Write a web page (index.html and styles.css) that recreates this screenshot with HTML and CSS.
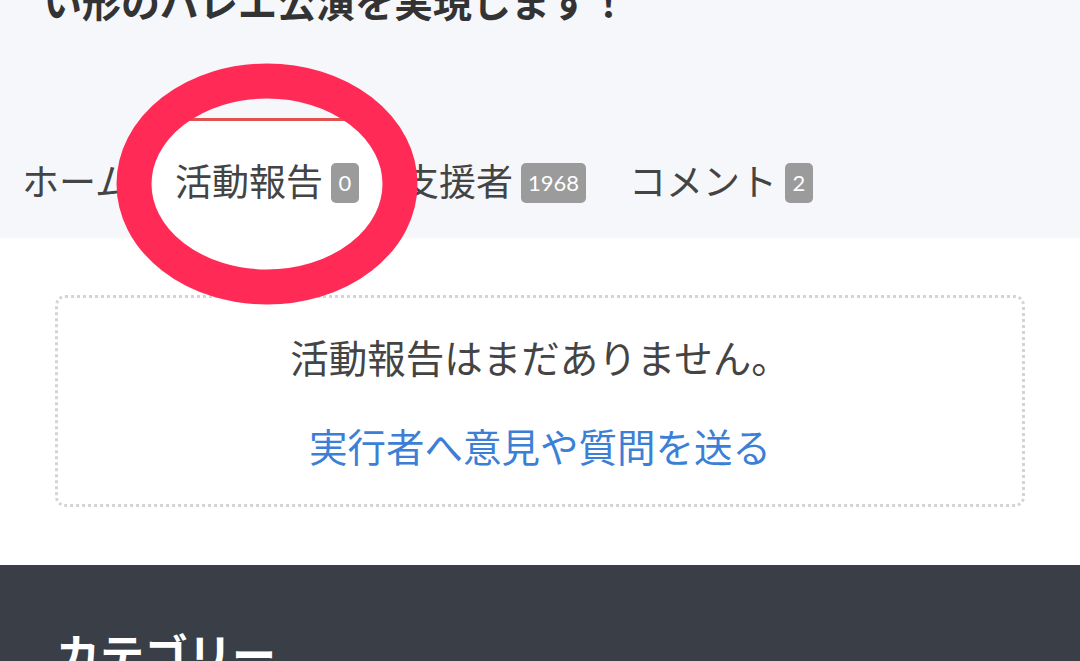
FILE: index.html
```html
<!DOCTYPE html>
<html lang="ja">
<head>
    <meta charset="UTF-8">
    <meta name="viewport" content="width=device-width, initial-scale=1.0">
    <title>プロジェクト 活動報告</title>
    <link rel="stylesheet" href="styles.css">
</head>
<body>
    <header class="project-head">
        <h1 class="project-title">い形のバレエ公演を実現します！</h1>

        <nav class="tabs">
            <a href="#" class="tab">ホーム</a>
            <a href="#" class="tab tab-active">活動報告<span class="tab-count">0</span></a>
            <a href="#" class="tab">支援者<span class="tab-count">1968</span></a>
            <a href="#" class="tab">コメント<span class="tab-count">2</span></a>
        </nav>
    </header>

    <main class="tab-body">
        <div class="empty-box">
            <p class="empty-text">活動報告はまだありません。</p>
            <a href="#" class="empty-link">実行者へ意見や質問を送る</a>
        </div>
    </main>

    <footer class="site-footer">
        <h2 class="footer-title">カテゴリー</h2>
    </footer>

    <!-- hand drawn marker over the active tab -->
    <svg class="marker" width="320" height="260" viewBox="0 0 320 260">
        <ellipse cx="160" cy="130" rx="133" ry="103" fill="none" stroke="#ff2b56" stroke-width="35"/>
    </svg>
</body>
</html>
```

FILE: styles.css
```css
:root {
    --head-bg: #f5f7fa;
    --text-dark: #333;
    --text-mid: #444;
    --badge-bg: #9b9b9b;
    --accent-red: #e0524b;
    --link-blue: #3c7fd6;
    --footer-bg: #3a3f47;
    --white: #fff;
}

* {
    margin: 0;
    padding: 0;
    box-sizing: border-box;
}

body {
    font-family: "Noto Sans CJK JP", "Noto Sans", sans-serif;
    line-height: 1.5;
    background-color: var(--white);
    position: relative;
    overflow: hidden;
    height: 661px;
}

.project-head {
    background-color: var(--head-bg);
}

.project-title {
    color: var(--text-dark);
    font-size: 39px;
    font-weight: 700;
    padding-left: 43px;
    margin-top: -29px;
}

.tabs {
    display: flex;
    margin-top: 88px;
}

.tab {
    display: flex;
    align-items: center;
    padding: 32px 21px 30px 22px;
    border-top: 3px solid transparent;
    color: var(--text-mid);
    font-size: 37px;
    text-decoration: none;
}

.tab-active {
    background-color: var(--white);
    border-top-color: var(--accent-red);
}

.tab-count {
    display: inline-flex;
    align-items: center;
    justify-content: center;
    height: 40px;
    min-width: 28px;
    padding: 0 7px;
    margin-left: 8px;
    margin-top: 5px;
    border-radius: 5px;
    background-color: var(--badge-bg);
    color: var(--white);
    font-family: Lato, "Noto Sans", sans-serif;
    font-size: 22px;
}

.tab-body {
    padding: 57px 55px 58px;
}

.empty-box {
    display: flex;
    flex-direction: column;
    align-items: center;
    padding: 30px 0 29px;
    border: 3px dotted #d4d4d4;
    border-radius: 10px;
    font-size: 38.5px;
}

.empty-text {
    color: var(--text-mid);
}

.empty-link {
    margin-top: 31px;
    color: var(--link-blue);
    text-decoration: none;
}

.site-footer {
    background-color: var(--footer-bg);
    padding: 55px 56px 40px;
}

.footer-title {
    color: var(--white);
    font-size: 44px;
    font-weight: 700;
}

/* annotation overlay */
.marker {
    position: absolute;
    left: 107px;
    top: 54px;
}
```
